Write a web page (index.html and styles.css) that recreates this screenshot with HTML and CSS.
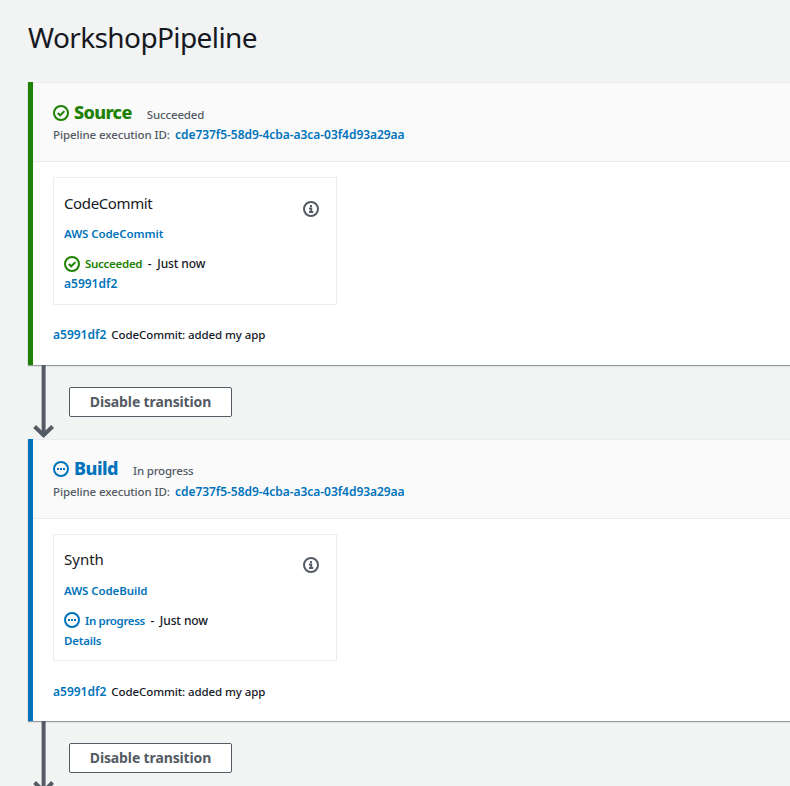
FILE: index.html
```html
<!DOCTYPE html>
<html lang="en">
<head>
<meta charset="utf-8">
<title>WorkshopPipeline</title>
<link rel="stylesheet" href="styles.css">
</head>
<body>
<svg class="defs" width="0" height="0" aria-hidden="true">
  <symbol id="ok" viewBox="0 0 16 16"><circle cx="8" cy="8" r="7"/><path d="M4.800 8 7.200 10.300 11.400 6.100"/></symbol>
  <symbol id="progress" viewBox="0 0 16 16"><circle cx="8" cy="8" r="7"/><path d="M4 8h2M7 8h2M10 8h2"/></symbol>
  <symbol id="info" viewBox="0 0 16 16"><circle cx="8" cy="8" r="7"/><path d="M7 4.900h2M6 7.600h2.200v3.200M6 11.100h4.200"/></symbol>
  <symbol id="arrow" viewBox="0 0 22 74"><path d="M11.600 0V70M2.600 61.500 11.600 70.300 20.600 61.500"/></symbol>
</svg>
<main class="page">
  <h1 class="title"><span class="t-title">WorkshopPipeline</span></h1>

  <section class="stage stage-ok">
    <header class="stage-header">
      <div class="stage-line">
        <svg class="icon"><use href="#ok"/></svg>
        <h2 class="stage-name t-source">Source</h2>
        <span class="stage-status t-succeeded">Succeeded</span>
      </div>
      <div class="execution"><span class="t-exec">Pipeline execution ID:</span><a class="link t-id">cde737f5-58d9-4cba-a3ca-03f4d93a29aa</a></div>
    </header>
    <div class="stage-body">
      <article class="action">
        <div class="action-info">
          <h3 class="action-name"><span class="t-codecommit">CodeCommit</span></h3>
          <div class="provider"><a class="link t-provider">AWS CodeCommit</a></div>
          <div class="status"><svg class="icon"><use href="#ok"/></svg><span class="state">Succeeded</span><span class="dash">-</span><span class="t-now">Just now</span></div>
          <div class="detail"><a class="link">a5991df2</a></div>
        </div>
        <svg class="icon info"><use href="#info"/></svg>
      </article>
      <div class="revision"><a class="link">a5991df2</a><span class="t-message">CodeCommit: added my app</span></div>
    </div>
  </section>

  <div class="transition">
    <svg class="arrow"><use href="#arrow"/></svg>
    <button class="button">Disable transition</button>
  </div>

  <section class="stage stage-progress">
    <header class="stage-header">
      <div class="stage-line">
        <svg class="icon"><use href="#progress"/></svg>
        <h2 class="stage-name t-build">Build</h2>
        <span class="stage-status t-inprogress">In progress</span>
      </div>
      <div class="execution"><span class="t-exec">Pipeline execution ID:</span><a class="link t-id">cde737f5-58d9-4cba-a3ca-03f4d93a29aa</a></div>
    </header>
    <div class="stage-body">
      <article class="action">
        <div class="action-info">
          <h3 class="action-name"><span>Synth</span></h3>
          <div class="provider"><a class="link t-provider">AWS CodeBuild</a></div>
          <div class="status"><svg class="icon"><use href="#progress"/></svg><span class="state">In progress</span><span class="dash">-</span><span class="t-now">Just now</span></div>
          <div class="detail"><a class="link t-details">Details</a></div>
        </div>
        <svg class="icon info"><use href="#info"/></svg>
      </article>
      <div class="revision"><a class="link">a5991df2</a><span class="t-message">CodeCommit: added my app</span></div>
    </div>
  </section>

  <div class="transition">
    <svg class="arrow"><use href="#arrow"/></svg>
    <button class="button">Disable transition</button>
  </div>
</main>
</body>
</html>
```
FILE: styles.css
```css
* { box-sizing: border-box; }
html, body { height: 100%; }
body {
  margin: 0;
  overflow: hidden;
  background: #f2f3f3;
  color: #16191f;
  font: 500 12px/20px "Noto Sans", sans-serif;
}
h1, h2, h3 { margin: 0; font-size: inherit; }
span, a, h2 { white-space: nowrap; }
.defs { position: absolute; }
.page { padding-left: 28px; }
.title { height: 82px; padding-top: 17px; font-size: 28px; font-weight: 450; line-height: 40px; letter-spacing: -.6px; }

.stage {
  --tone: #1d8102;
  height: 283px;
  border-left: 5px solid var(--tone);
  background: #fff;
  box-shadow: 0 1px 1px rgba(0, 28, 36, .4);
}
.stage-progress { --tone: #0073bb; height: 282px; }
.stage-header {
  height: 80px;
  padding: 19px 20px 0;
  border-top: 1px solid #eaeded;
  border-bottom: 1px solid #eaeded;
  background: #fafafa;
}
.stage-line { display: flex; height: 23px; }
.icon {
  flex: none;
  width: 16px;
  height: 16px;
  fill: none;
  stroke: var(--tone);
  stroke-width: 2;
}
.stage-line .icon { margin-top: 3px; }
.stage-progress .stage-line .icon { margin-top: 2px; }
.stage-name { margin-left: 5px; color: var(--tone); font-size: 18px; font-weight: 800; line-height: 20px; letter-spacing: -.65px; }
.t-build { line-height: 18px; letter-spacing: -.5px; }
.stage-status { margin-left: 15px; color: #545b64; font-size: 11.5px; line-height: 26px; letter-spacing: -.15px; }
.t-inprogress { line-height: 24px; letter-spacing: -.2px; }
.execution { display: flex; gap: 5px; color: #545b64; }
.t-exec { width: 117px; font-size: 11.5px; letter-spacing: -.1px; }
.link { color: #0073bb; font-weight: 600; }
.t-id { letter-spacing: -.05px; }

.stage-body { padding: 15px 20px 0; }
.action {
  display: flex;
  justify-content: space-between;
  width: 284px;
  height: 128px;
  padding: 15px 17px 0 10px;
  border: 1px solid #eaeded;
}
.stage-progress .action { height: 127px; }
.action-name { height: 31px; font-size: 15px; font-weight: 450; }
.stage-progress .action-name { line-height: 18px; }
.t-codecommit { letter-spacing: -.38px; }
.provider { height: 30px; }
.t-provider { font-size: 11.5px; letter-spacing: -.08px; }
.status { display: flex; height: 20px; }
.status .icon { margin: 2px 5px 0 0; }
.stage-progress .status .icon { margin-top: 1px; }
.state { color: var(--tone); font-size: 11.5px; font-weight: 600; letter-spacing: -.28px; }
.stage-progress .state { letter-spacing: -.35px; }
.dash { width: 15px; text-align: center; }
.t-now { letter-spacing: -.1px; }
.t-details { font-size: 11.5px; letter-spacing: -.2px; }
.info { margin-top: 8px; stroke: #545b64; }
.stage-progress .info { margin-top: 7px; }
.revision { display: flex; gap: 5px; margin-top: 20px; }
.stage-progress .revision { padding-top: 1px; }
.t-message { font-size: 11.5px; letter-spacing: -.09px; }

.transition { display: flex; height: 74px; }
.stage-progress + .transition { height: 65px; }
.arrow { flex: none; width: 22px; height: 74px; margin-left: 4px; fill: none; stroke: #545b64; stroke-width: 4; }
.button {
  width: 163px;
  height: 30px;
  margin: 22px 0 0 15px;
  padding: 0;
  border: 1px solid #545b64;
  border-radius: 2px;
  background: #fff;
  color: #545b64;
  font: 700 14px/20px "Noto Sans", sans-serif;
  letter-spacing: -.13px;
}
```
